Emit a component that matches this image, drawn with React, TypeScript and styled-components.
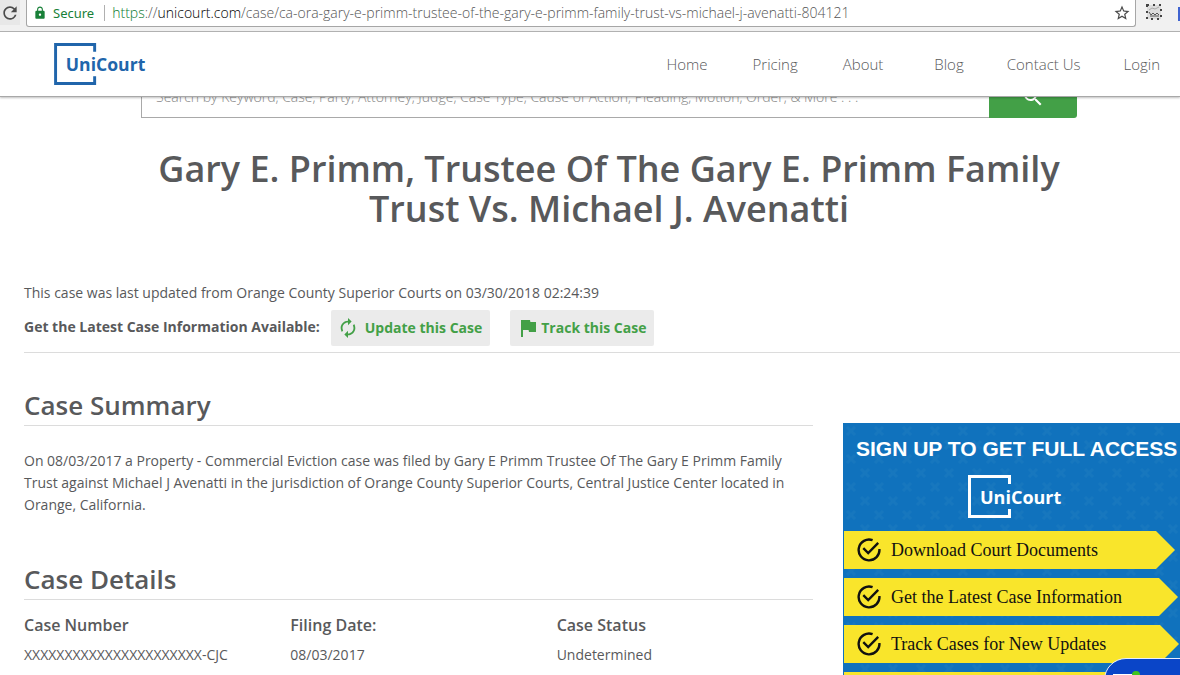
import React from 'react';
import styled, { createGlobalStyle } from 'styled-components';
import {
  MdAutorenew,
  MdFlag,
  MdLock,
  MdRefresh,
  MdSearch,
  MdStarBorder,
} from 'react-icons/md';

const ink = '#58595b';
const green = '#43a047';
const blue = '#1072bd';
const rule = '#dcdcdc';

const GlobalStyle = createGlobalStyle`
  *, *::before, *::after { box-sizing: border-box; }
  body {
    margin: 0;
    background: #fff;
    color: ${ink};
    font-family: 'Open Sans', 'Noto Sans', sans-serif;
    font-size: 14px;
    line-height: 22px;
  }
  h1, h2, p, ul, dl, dd { margin: 0; padding: 0; }
  a { color: inherit; text-decoration: none; }
  button { font-family: inherit; border: 0; padding: 0; cursor: pointer; }
`;

const Page = styled.div`
  height: 100vh;
  overflow: hidden;
  display: flex;
  flex-direction: column;
`;

/* Browser bar */

const BrowserBar = styled.div`
  flex: none;
  display: flex;
  height: 32px;
  background: #f1f1f1;
  border-bottom: 1px solid #b4b4b4;
`;

const ReloadButton = styled.button`
  width: 26px;
  height: 25px;
  background: #e8e8e8;
  border-right: 6px solid #f1f1f1;
  color: #4a4a4a;
  display: flex;
  align-items: center;
  justify-content: center;
`;

const Address = styled.div`
  flex: 1;
  height: 27px;
  display: flex;
  align-items: center;
  padding: 0 4px 0 6px;
  background: #fff;
  border: 1px solid #a6a6a6;
  border-top: 0;
  border-radius: 0 0 3px 3px;
`;

const Secure = styled.span`
  display: flex;
  align-items: center;
  gap: 6px;
  padding-right: 10px;
  margin-right: 7px;
  border-right: 1px solid #b0b0b0;
  color: #188038;
  font: 13px/16px 'Noto Sans', sans-serif;
`;

const Url = styled.div`
  flex: 1;
  color: #555;
  font-weight: 300;
  white-space: nowrap;
  b { font-weight: 300; color: #000; }
  i { font-style: normal; color: #0b7a30; }
`;

const StarButton = styled.button`
  display: flex;
  background: none;
  color: #4a4a4a;
`;

const Extensions = styled.div`
  width: 44px;
  display: flex;
  justify-content: space-between;
  padding: 4px 0 0 10px;
`;

const ExtensionEdge = styled.span`
  width: 2px;
  height: 14px;
  margin-top: 3px;
  background: #3f63d0;
`;

/* Site header */

const Header = styled.header`
  flex: none;
  position: relative;
  z-index: 1;
  height: 65px;
  display: flex;
  align-items: center;
  justify-content: space-between;
  padding: 0 20px 0 54px;
  background: #fff;
  border-bottom: 1px solid #a8a8a8;
  box-shadow: 0 1px 2px rgba(0, 0, 0, 0.25);
`;

const HomeLink = styled.a`
  display: flex;
`;

const Nav = styled.nav`
  display: flex;
  gap: 51px;
  font-size: 15px;
  font-weight: 300;
`;

const NavGroup = styled.div<{ $gap: number }>`
  display: flex;
  gap: ${(p) => p.$gap}px;
`;

const Content = styled.main`
  flex: none;
  margin-right: -14px;
  padding-left: 24px;
`;

const SearchForm = styled.form`
  display: flex;
  height: 42px;
  margin: -21px 117px 0;
`;

const SearchInput = styled.input`
  flex: 1;
  min-width: 0;
  padding: 0 14px 2px;
  border: 1px solid #a9a9a9;
  border-right: 0;
  font: 300 14px 'Open Sans', sans-serif;
  color: ${ink};
  &::placeholder { color: #8a8a8a; opacity: 1; }
`;

const SearchButton = styled.button`
  width: 88px;
  display: flex;
  align-items: center;
  justify-content: center;
  background: ${green};
  border-radius: 0 3px 3px 0;
  color: #fff;
`;

const Title = styled.h1`
  margin-top: 31px;
  padding: 0 120px;
  text-align: center;
  font-size: 36px;
  font-weight: 600;
  line-height: 40px;
`;

const CaseStatus = styled.section`
  margin-top: 53px;
  padding-bottom: 6px;
  border-bottom: 1px solid ${rule};
`;

const Actions = styled.div`
  display: flex;
  align-items: center;
  margin-top: 6px;
`;

const ActionsLabel = styled.span`
  padding-bottom: 2px;
  font-weight: 700;
`;

const ActionButton = styled.button<{ $gap: number }>`
  display: flex;
  align-items: center;
  gap: ${(p) => p.$gap}px;
  height: 36px;
  padding: 0 8px 0 6px;
  background: #ebebeb;
  border-radius: 2px;
  color: ${green};
  font-size: 14px;
  font-weight: 700;
  line-height: 20px;
  &:first-of-type { margin: 0 20px 0 11px; }
`;

const Columns = styled.div`
  display: grid;
  grid-template-columns: minmax(0, 1fr) 351px;
  gap: 30px;
`;

const SectionTitle = styled.h2<{ $space: number }>`
  margin-top: ${(p) => p.$space}px;
  padding-bottom: 3px;
  border-bottom: 1px solid ${rule};
  font-size: 26px;
  font-weight: 600;
  line-height: 34px;
`;

const Summary = styled.p`
  margin-top: 24px;
`;

const Details = styled.dl`
  display: grid;
  grid-template-columns: repeat(3, 1fr);
  gap: 10px;
  margin-top: 14px;
  dt { font-size: 16px; font-weight: 600; }
  dd { margin-top: 8px; }
`;

/* Sign up panel */

const Panel = styled.aside`
  position: relative;
  margin-top: 70px;
  padding: 13px 0 20px 1px;
  background: ${blue};
  color: #fff;
`;

const PanelPattern = styled.svg`
  position: absolute;
  inset: 0;
  width: 100%;
  height: 100%;
`;

const PanelBody = styled.div`
  position: relative;
  display: flex;
  flex-direction: column;
`;

const PanelTitle = styled.h2`
  padding-left: 12px;
  font: 700 21px/26px 'Liberation Sans', Arial, sans-serif;
  white-space: nowrap;
`;

const PanelLogo = styled.div`
  display: flex;
  margin: 13px 0 13px 124px;
`;

const Benefits = styled.ul`
  display: grid;
  gap: 9px;
  list-style: none;
`;

const Benefit = styled.li<{ $width: number }>`
  display: flex;
  align-items: center;
  gap: 10px;
  width: ${(p) => p.$width}px;
  height: 38px;
  padding-left: 13px;
  background: #f9e52b;
  clip-path: polygon(0 0, calc(100% - 19px) 0, 100% 50%, calc(100% - 19px) 100%, 0 100%);
  color: #111;
  font: 18px/22px 'Liberation Serif', 'Times New Roman', serif;
`;

const ChatTab = styled.button`
  position: fixed;
  right: -40px;
  bottom: -40px;
  z-index: 2;
  width: 116px;
  height: 57px;
  background: #0a45c8;
  border: 1px solid #e8eefc;
  border-radius: 22px;
  display: flex;
  align-items: flex-start;
  padding: 11px 0 0 8px;
`;

const LogoArt = styled.svg`
  overflow: visible;
`;

function Logo({ color, size }: { color: string; size: number }) {
  return (
    <LogoArt width={Math.round((size * 96) / 43)} height={size} viewBox="0 0 96 43" role="img" aria-label="UniCourt">
      <path
        d="M41.5 9V1.5H1.5V41.5H41.5V34"
        fill="none"
        stroke={color}
        strokeWidth="3"
      />
      <text
        x="12"
        y="29"
        fill={color}
        fontFamily="'Open Sans', 'Noto Sans', sans-serif"
        fontSize="18"
        fontWeight="700"
      >
        UniCourt
      </text>
    </LogoArt>
  );
}

function CheckRing() {
  return (
    <svg width="24" height="24" viewBox="0 0 24 24" fill="none" stroke="#111" strokeWidth="2.4" aria-hidden="true">
      <path d="M15.6 2.2A10.4 10.4 0 1 0 22.4 11" />
      <path d="M6.3 10.2L11.2 15L21.2 4.8" />
    </svg>
  );
}

const productLinks = ['Home', 'Pricing', 'About'];
const companyLinks = ['Blog', 'Contact Us', 'Login'];

const details = [
  { label: 'Case Number', value: 'XXXXXXXXXXXXXXXXXXXXXX-CJC' },
  { label: 'Filing Date:', value: '08/03/2017' },
  { label: 'Case Status', value: 'Undetermined' },
];

const benefits = [
  { text: 'Download Court Documents', width: 331 },
  { text: 'Get the Latest Case Information', width: 334 },
  { text: 'Track Cases for New Updates', width: 335 },
];

export default function App() {
  return (
    <>
      <GlobalStyle />
      <Page>
        <BrowserBar>
          <ReloadButton aria-label="Reload">
            <MdRefresh size={22} />
          </ReloadButton>
          <Address>
            <Secure>
              <MdLock size={14} />
              Secure
            </Secure>
            <Url>
              <i>https</i>://<b>unicourt.com</b>
              /case/ca-ora-gary-e-primm-trustee-of-the-gary-e-primm-family-trust-vs-michael-j-avenatti-804121
            </Url>
            <StarButton aria-label="Bookmark">
              <MdStarBorder size={18} />
            </StarButton>
          </Address>
          <Extensions>
            <svg width="16" height="16" viewBox="0 0 16 16" aria-hidden="true">
              <rect x="1" y="1" width="14" height="14" fill="#ddd" stroke="#444" strokeWidth="2" strokeDasharray="2 4" />
              <path d="M3 6l3-2 3 1 4-2" fill="none" stroke="#aaa" />
              <path d="M3 8l2 3 2-2 2 2 2-2 2 2M4 12h9" fill="none" stroke="#555" />
            </svg>
            <ExtensionEdge />
          </Extensions>
        </BrowserBar>

        <Header>
          <HomeLink href="#home">
            <Logo color="#2065ab" size={42} />
          </HomeLink>
          <Nav>
            <NavGroup $gap={45}>
              {productLinks.map((link) => (
                <a key={link} href="#nav">
                  {link}
                </a>
              ))}
            </NavGroup>
            <NavGroup $gap={43}>
              {companyLinks.map((link) => (
                <a key={link} href="#nav">
                  {link}
                </a>
              ))}
            </NavGroup>
          </Nav>
        </Header>

        <Content>
          <SearchForm>
            <SearchInput
              type="search"
              aria-label="Search cases"
              placeholder="Search by Keyword, Case, Party, Attorney, Judge, Case Type, Cause of Action, Pleading, Motion, Order, & More . . ."
            />
            <SearchButton type="button" aria-label="Search">
              <MdSearch size={24} />
            </SearchButton>
          </SearchForm>

          <Title>Gary E. Primm, Trustee Of The Gary E. Primm Family Trust Vs. Michael J. Avenatti</Title>

          <CaseStatus>
            <p>This case was last updated from Orange County Superior Courts on 03/30/2018 02:24:39</p>
            <Actions>
              <ActionsLabel>Get the Latest Case Information Available:</ActionsLabel>
              <ActionButton $gap={6}>
                <MdAutorenew size={22} />
                <span>Update this Case</span>
              </ActionButton>
              <ActionButton $gap={1}>
                <MdFlag size={24} />
                <span>Track this Case</span>
              </ActionButton>
            </Actions>
          </CaseStatus>

          <Columns>
            <div>
              <SectionTitle $space={35}>Case Summary</SectionTitle>
              <Summary>
                On 08/03/2017 a Property - Commercial Eviction case was filed by Gary E Primm Trustee Of
                The Gary E Primm Family Trust against Michael J Avenatti in the jurisdiction of Orange
                County Superior Courts, Central Justice Center located in Orange, California.
              </Summary>
              <SectionTitle $space={46}>Case Details</SectionTitle>
              <Details>
                {details.map((item) => (
                  <div key={item.label}>
                    <dt>{item.label}</dt>
                    <dd>{item.value}</dd>
                  </div>
                ))}
              </Details>
            </div>

            <Panel>
              <PanelPattern aria-hidden="true">
                <defs>
                  <pattern id="weave" width="28" height="28" patternUnits="userSpaceOnUse">
                    <path
                      d="M4 4l8 8M12 4l-8 8M18 18l8 8M26 18l-8 8"
                      stroke="#1d7cc0"
                      strokeWidth="3"
                      opacity="0.5"
                    />
                  </pattern>
                </defs>
                <rect width="100%" height="100%" fill="url(#weave)" />
              </PanelPattern>
              <PanelBody>
                <PanelTitle>SIGN UP TO GET FULL ACCESS</PanelTitle>
                <PanelLogo>
                  <Logo color="#fff" size={43} />
                </PanelLogo>
                <Benefits>
                  {benefits.map((item) => (
                    <Benefit key={item.text} $width={item.width}>
                      <CheckRing />
                      {item.text}
                    </Benefit>
                  ))}
                  <Benefit $width={335} aria-hidden="true" />
                </Benefits>
              </PanelBody>
            </Panel>
          </Columns>
        </Content>

        <ChatTab aria-label="Open chat">
          <svg width="36" height="30" viewBox="0 0 36 30" aria-hidden="true">
            <rect x="0" y="4" width="20" height="20" fill="#fff" />
            <circle cx="23" cy="5" r="4" fill="#3fc41c" />
          </svg>
        </ChatTab>
      </Page>
    </>
  );
}
